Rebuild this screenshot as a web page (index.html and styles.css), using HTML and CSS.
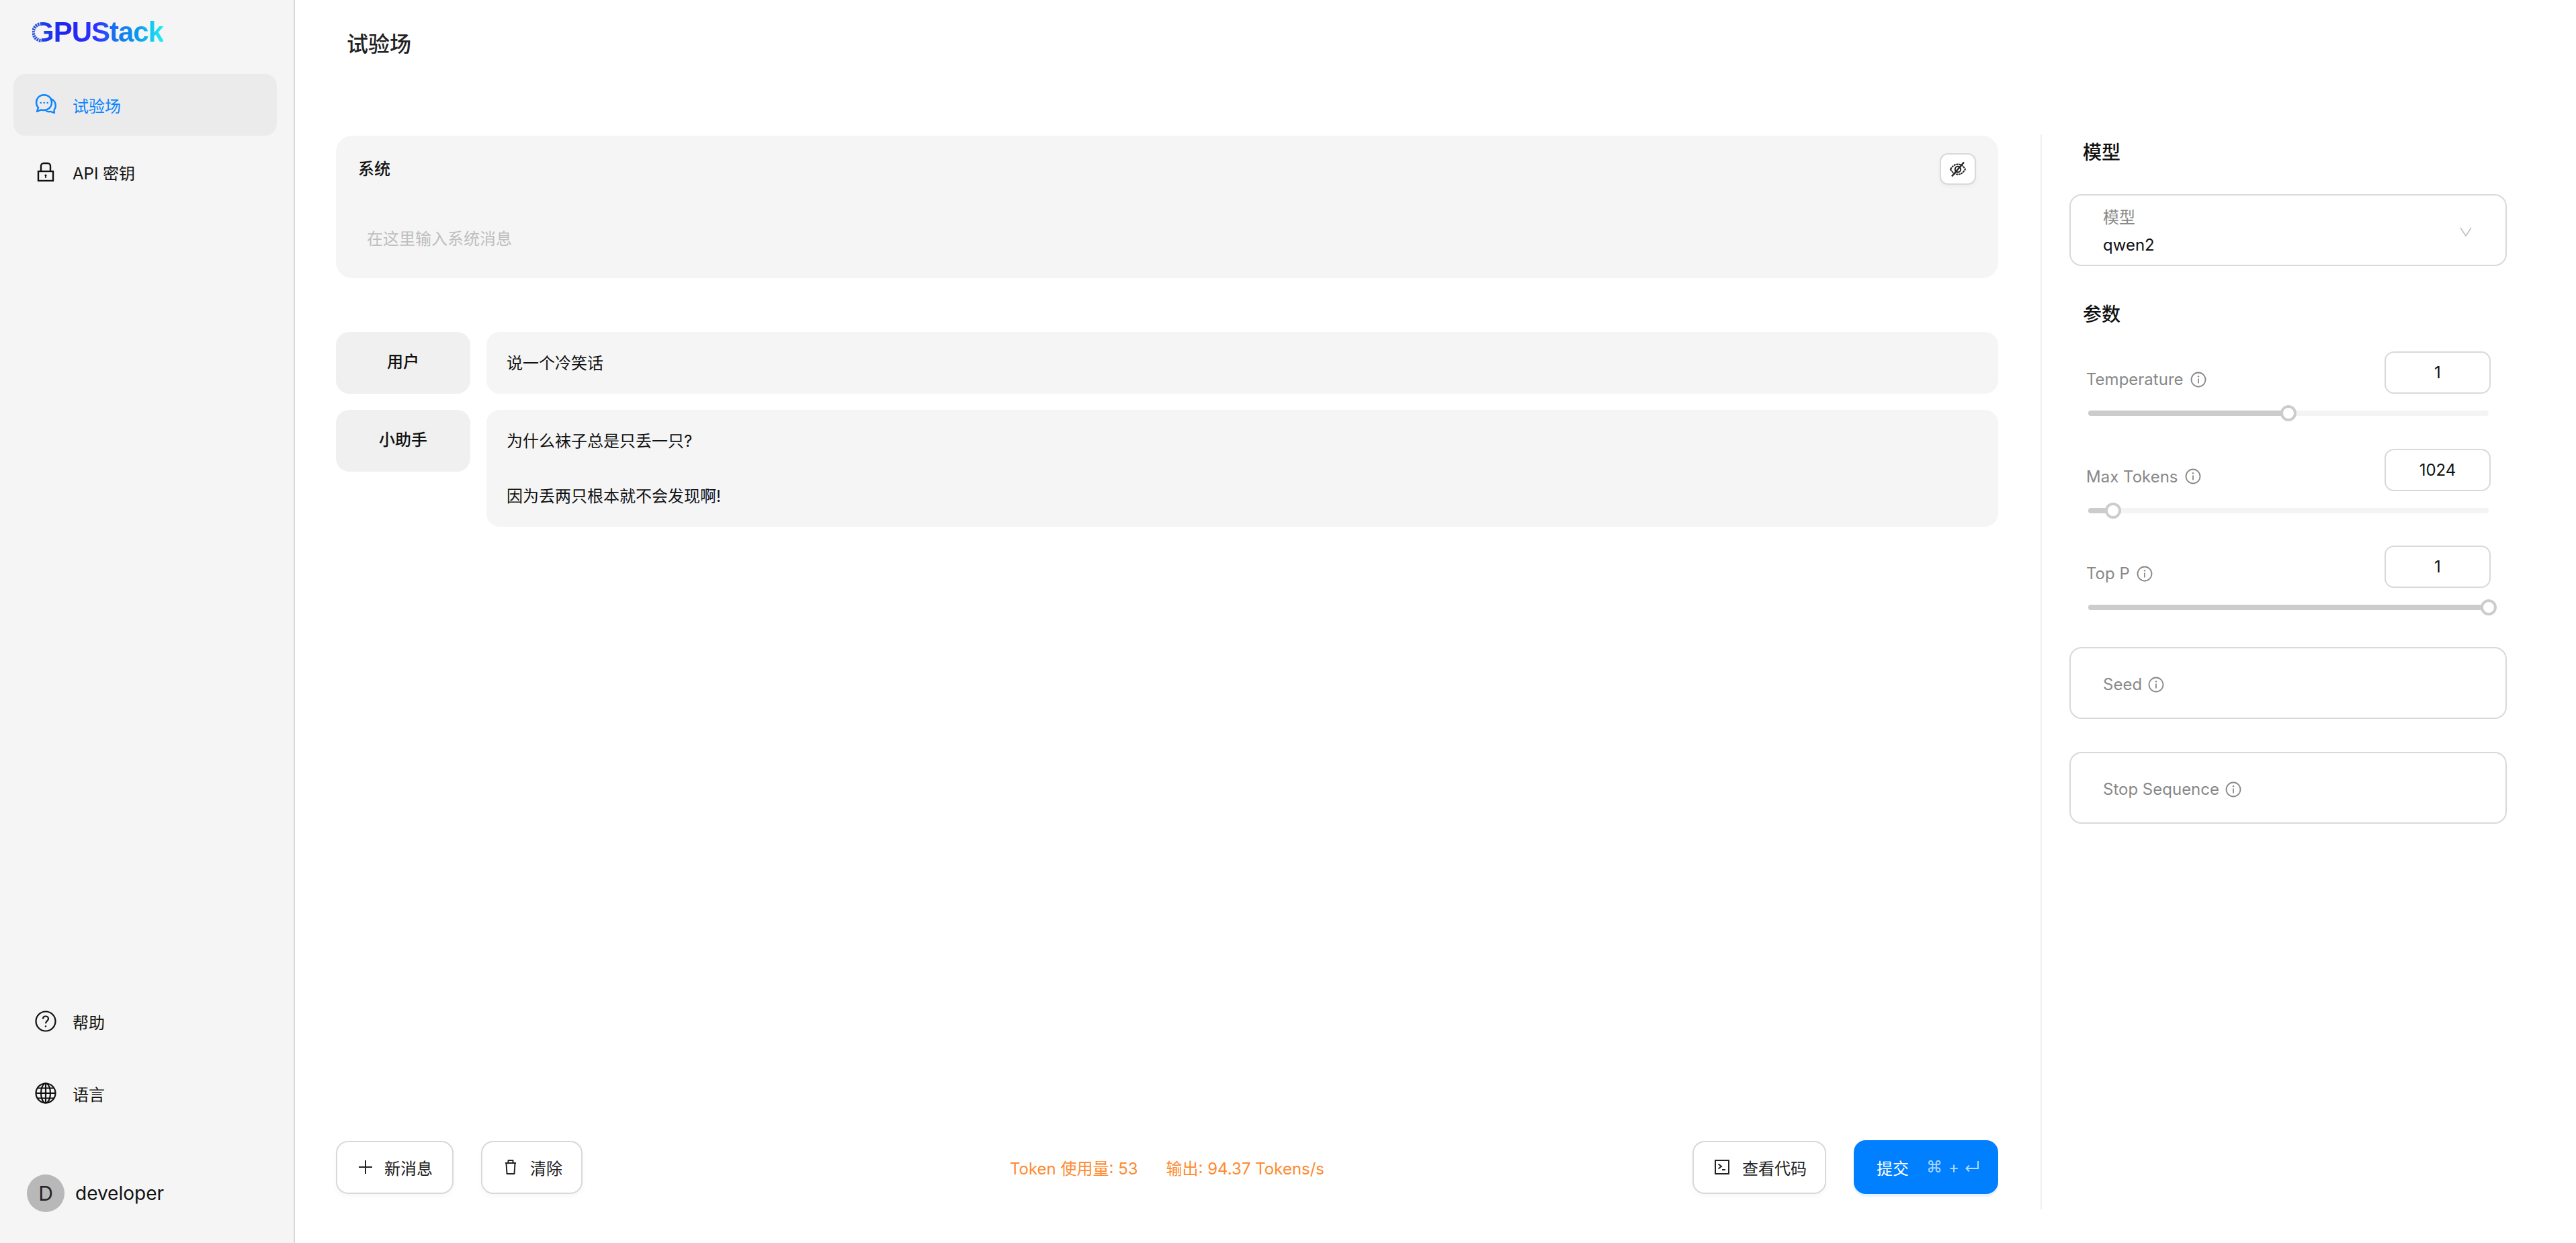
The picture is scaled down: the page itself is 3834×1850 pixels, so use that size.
FILE: index.html
```html
<!DOCTYPE html>
<html lang="zh-CN">
<head>
    <meta charset="UTF-8">
    <title>试验场 - GPUStack</title>
    <link rel="stylesheet" href="styles.css">
</head>
<body>
    <div class="app">
        <aside class="sidebar">
            <div class="logo">
                <span class="logo-text">GPUStack</span>
                <svg class="logo-ring" viewBox="0 0 20 32" width="20" height="32">
                    <rect width="14" height="32" fill="#f5f5f5"/>
                    <path d="M14 3.500A12.500 12.500 0 0 0 14 28.500" fill="none" stroke="#2f55e0" stroke-width="5" stroke-dasharray="2.500 1"/>
                </svg>
            </div>
            <nav class="nav">
                <a class="nav-item active">
                    <svg class="nav-icon" viewBox="0 0 32 32" fill="none" stroke="currentColor" stroke-width="2.400" stroke-linejoin="round">
                        <path d="M13.500 1.200C7 1.200 2 6.200 2 12.500c0 3 1.200 5.700 3 7.700L3 26l6.500-2.700c1.300.5 2.500.7 4 .7C20 24 25 19 25 12.500S20 1.200 13.500 1.200z"/>
                        <path d="M24 7c4 2 6.800 6 6.800 10.500 0 2.500-.8 4.500-2.300 6.200l.3 4.300-5.800-2.200c-2 .6-4.500.5-6.500-.5"/>
                        <circle cx="8.700" cy="13" r="1.300" fill="currentColor" stroke="none"/>
                        <circle cx="13.700" cy="13" r="1.300" fill="currentColor" stroke="none"/>
                        <circle cx="18.700" cy="13" r="1.300" fill="currentColor" stroke="none"/>
                    </svg>
                    <span>试验场</span>
                </a>
                <a class="nav-item">
                    <svg class="nav-icon" viewBox="0 0 32 32" fill="none" stroke="currentColor" stroke-width="2.400">
                        <rect x="5" y="15" width="22" height="14"/>
                        <path d="M9 15V7a4 4 0 0 1 4-4h6a4 4 0 0 1 4 4v8"/>
                        <circle cx="16" cy="21" r="1.600" fill="currentColor" stroke="none"/>
                        <path d="M16 21v4" stroke-width="1.600"/>
                    </svg>
                    <span>API 密钥</span>
                </a>
            </nav>
            <div class="sidebar-bottom">
                <a class="nav-item">
                    <svg class="nav-icon" viewBox="0 0 32 32" fill="none" stroke="currentColor" stroke-width="2.200">
                        <circle cx="16" cy="16" r="14.500"/>
                        <path d="M12 12.500c0-2.500 1.800-4 4-4s4 1.500 4 3.800c0 3.200-4 3.200-4 7"/>
                        <circle cx="16" cy="23.500" r="1.300" fill="currentColor" stroke="none"/>
                    </svg>
                    <span>帮助</span>
                </a>
                <a class="nav-item">
                    <svg class="nav-icon" viewBox="0 0 32 32" fill="none" stroke="currentColor" stroke-width="2.200">
                        <circle cx="16" cy="16" r="14.500"/>
                        <ellipse cx="16" cy="16" rx="7" ry="14.500"/>
                        <path d="M16 1.500v29M1.500 16h29M4 8.500h24M4 23.500h24"/>
                    </svg>
                    <span>语言</span>
                </a>
                <div class="user">
                    <span class="avatar">D</span>
                    <span class="user-name">developer</span>
                </div>
            </div>
        </aside>

        <main class="main">
            <h1 class="page-title">试验场</h1>
            <div class="workspace">
                <section class="chat">
                    <div class="system-card">
                        <div class="system-head">
                            <span class="system-title">系统</span>
                            <button class="eye-button">
                                <svg viewBox="0 0 28 28" width="28" height="28" fill="none" stroke="#222" stroke-width="2">
                                    <path d="M3 14c3-5 6.500-7.500 11-7.500S22 9 25 14c-3 5-6.500 7.500-11 7.500S6 19 3 14z" stroke-dasharray="3 .8"/>
                                    <circle cx="14" cy="14" r="4.200"/>
                                    <path d="M23 3.500 5 24.500" stroke-width="2.400"/>
                                </svg>
                            </button>
                        </div>
                        <div class="system-placeholder">在这里输入系统消息</div>
                    </div>
                    <div class="messages">
                        <div class="message">
                            <div class="role">用户</div>
                            <div class="bubble">说一个冷笑话</div>
                        </div>
                        <div class="message">
                            <div class="role">小助手</div>
                            <div class="bubble">为什么袜子总是只丢一只?<br><br>因为丢两只根本就不会发现啊!</div>
                        </div>
                    </div>
                    <div class="chat-footer">
                        <div class="footer-left">
                            <button class="btn btn-new">
                                <svg viewBox="0 0 20 20" width="20" height="20" fill="none" stroke="#222" stroke-width="2"><path d="M10 0v20M0 10h20"/></svg>
                                新消息
                            </button>
                            <button class="btn btn-clear">
                                <svg viewBox="0 0 20 22" width="20" height="22" fill="none" stroke="#222" stroke-width="2" stroke-linejoin="round"><path d="M2 5h16M3.500 5l1 16h11l1-16M6.500 5V1h7v4"/></svg>
                                清除
                            </button>
                        </div>
                        <div class="usage">
                            <span>Token 使用量: 53</span>
                            <span>输出: 94.37 Tokens/s</span>
                        </div>
                        <div class="footer-right">
                            <button class="btn btn-code">
                                <svg viewBox="0 0 22 22" width="22" height="22" fill="none" stroke="#222" stroke-width="2"><rect x="1" y="1" width="20" height="20"/><path d="M5.500 6.500 10 10l-4.500 3.500M11 15h5"/></svg>
                                查看代码
                            </button>
                            <button class="btn btn-submit">
                                <span>提交</span>
                                <span class="shortcut">
                                    <span class="cmd">⌘</span><span>+</span>
                                    <svg viewBox="0 0 20 18" width="20" height="18" fill="none" stroke="currentColor" stroke-width="2"><path d="M19 0v11H2M6 6.500 1.500 11 6 15.500"/></svg>
                                </span>
                            </button>
                        </div>
                    </div>
                </section>

                <section class="panel">
                    <h2 class="panel-title">模型</h2>
                    <div class="field field-select">
                        <div class="field-text">
                            <span class="field-label">模型</span>
                            <span class="field-value">qwen2</span>
                        </div>
                        <svg class="chevron" viewBox="0 0 18 14" width="18" height="14" fill="none" stroke="#bbb" stroke-width="1.500"><path d="M1 1l8 12 8-12"/></svg>
                    </div>

                    <h2 class="panel-title params-title">参数</h2>
                    <div class="param">
                        <div class="param-head">
                            <span class="param-label">Temperature <svg class="info" viewBox="0 0 24 24"><use href="#icon-info"/></svg></span>
                            <div class="param-input">1</div>
                        </div>
                        <div class="slider"><div class="slider-fill" style="width: 50%"></div><span class="slider-handle" style="left: 50%"></span></div>
                    </div>
                    <div class="param">
                        <div class="param-head">
                            <span class="param-label">Max Tokens <svg class="info" viewBox="0 0 24 24"><use href="#icon-info"/></svg></span>
                            <div class="param-input">1024</div>
                        </div>
                        <div class="slider"><div class="slider-fill" style="width: 6.2%"></div><span class="slider-handle" style="left: 6.2%"></span></div>
                    </div>
                    <div class="param">
                        <div class="param-head">
                            <span class="param-label">Top P <svg class="info" viewBox="0 0 24 24"><use href="#icon-info"/></svg></span>
                            <div class="param-input">1</div>
                        </div>
                        <div class="slider"><div class="slider-fill" style="width: 100%"></div><span class="slider-handle" style="left: 100%"></span></div>
                    </div>

                    <div class="field field-empty field-seed">
                        <span class="field-label">Seed <svg class="info" viewBox="0 0 24 24"><use href="#icon-info"/></svg></span>
                    </div>
                    <div class="field field-empty">
                        <span class="field-label">Stop Sequence <svg class="info" viewBox="0 0 24 24"><use href="#icon-info"/></svg></span>
                    </div>
                </section>
            </div>
        </main>
    </div>

    <svg class="sprite" width="0" height="0">
        <symbol id="icon-info" viewBox="0 0 24 24">
            <circle cx="12" cy="12" r="10.500" fill="none" stroke="currentColor" stroke-width="1.800"/>
            <path d="M12 10.500v7" stroke="currentColor" stroke-width="1.800" fill="none"/>
            <circle cx="12" cy="7.200" r="1.200" fill="currentColor"/>
        </symbol>
    </svg>
</body>
</html>
```

FILE: styles.css
```css
* {
    box-sizing: border-box;
}
html, body {
    margin: 0;
    height: 100%;
}
body {
    font-family: Inter, "Noto Sans CJK SC", sans-serif;
    font-size: 24px;
    color: #111;
    background-color: #fff;
    overflow: hidden;
}
button {
    font: inherit;
}
.sprite {
    position: absolute;
}
.app {
    display: flex;
    height: 100%;
}

/* sidebar */
.sidebar {
    display: flex;
    flex-direction: column;
    flex: 0 0 439px;
    background-color: #f5f5f5;
    border-right: 2px solid #d9d9d9;
    padding: 0 25px 46px 20px;
}
.logo {
    position: relative;
    height: 110px;
    padding: 24px 0 0 28px;
}
.logo-ring {
    position: absolute;
    left: 28px;
    top: 32px;
}
.logo-text {
    font-family: "Liberation Sans", sans-serif;
    font-weight: 700;
    font-size: 42px;
    letter-spacing: -1px;
    line-height: 48px;
    background: linear-gradient(90deg, #1a4fe8 0%, #2222ee 25%, #2f35ff 50%, #1a6ff0 62%, #0a98f0 80%, #1ff0f0 100%);
    -webkit-background-clip: text;
    background-clip: text;
    color: transparent;
}
.nav {
    display: flex;
    flex-direction: column;
    gap: 8px;
}
.nav-item {
    display: flex;
    align-items: center;
    gap: 24px;
    height: 92px;
    padding-left: 32px;
    border-radius: 18px;
    color: #111;
}
.nav-item.active {
    background-color: #ebebeb;
    color: #0a84ff;
}
.nav-icon {
    flex: none;
    width: 32px;
    height: 32px;
}
.sidebar-bottom {
    display: flex;
    flex-direction: column;
    gap: 15px;
    margin-top: auto;
}
.user {
    display: flex;
    align-items: center;
    gap: 16px;
    margin-top: 60px;
    padding-left: 20px;
}
.avatar {
    display: flex;
    align-items: center;
    justify-content: center;
    width: 56px;
    height: 56px;
    border-radius: 50%;
    background-color: #b8b8b8;
    font-size: 30px;
    color: #222;
}
.user-name {
    font-size: 28px;
}

/* main */
.main {
    flex: 1;
    display: flex;
    flex-direction: column;
    min-width: 0;
}
.page-title {
    height: 200px;
    margin: 0;
    padding: 44px 0 0 77px;
    font-size: 32px;
    line-height: 44px;
    font-weight: 500;
    color: #222;
}
.workspace {
    display: flex;
    height: 1600px;
    padding-left: 61px;
}

/* chat column */
.chat {
    display: flex;
    flex-direction: column;
    flex: 0 0 2474px;
    padding: 2px 0 23px;
}
.system-card {
    height: 212px;
    padding: 26px 33px 0;
    border-radius: 24px;
    background-color: #f5f5f5;
}
.system-head {
    display: flex;
    align-items: center;
    justify-content: space-between;
}
.system-title {
    font-weight: 500;
    line-height: 47px;
}
.eye-button {
    display: flex;
    align-items: center;
    justify-content: center;
    width: 54px;
    height: 47px;
    padding: 0;
    background-color: #fff;
    border: 2px solid #d9d9d9;
    border-radius: 12px;
    box-shadow: 0 3px 6px rgba(0, 0, 0, 0.04);
}
.system-placeholder {
    margin: 61px 0 0 13px;
    line-height: 40px;
    color: #bfbfbf;
}
.messages {
    display: flex;
    flex-direction: column;
    gap: 24px;
    margin-top: 80px;
}
.message {
    display: flex;
    align-items: flex-start;
    gap: 24px;
}
.role {
    flex: 0 0 200px;
    height: 92px;
    line-height: 90px;
    border-radius: 20px;
    background-color: #f0f0f0;
    text-align: center;
    font-weight: 500;
}
.bubble {
    flex: 1;
    padding: 26px 30px 25px;
    line-height: 41px;
    border-radius: 20px;
    background-color: #f5f5f5;
}
.chat-footer {
    position: relative;
    display: flex;
    align-items: center;
    justify-content: space-between;
    margin-top: auto;
}
.footer-left, .footer-right {
    display: flex;
    align-items: center;
    gap: 41px;
}
.btn {
    display: flex;
    align-items: center;
    height: 79px;
    background-color: #fff;
    border: 2px solid #d9d9d9;
    border-radius: 18px;
    box-shadow: 0 4px 8px rgba(0, 0, 0, 0.03);
    color: #222;
    white-space: nowrap;
}
.btn-new {
    width: 175px;
    gap: 18px;
    padding: 0 0 0 32px;
}
.btn-clear {
    width: 151px;
    gap: 19px;
    padding: 0 0 0 32px;
}
.btn-code {
    width: 199px;
    gap: 19px;
    padding: 0 0 0 31px;
}
.btn-submit {
    width: 215px;
    height: 80px;
    gap: 26px;
    padding: 0 0 0 34px;
    background-color: #007fff;
    border: none;
    color: #fff;
    box-shadow: 0 4px 0 #e6f4ff;
}
.shortcut {
    display: flex;
    align-items: center;
    gap: 9px;
    color: rgba(255, 255, 255, 0.7);
}
.cmd {
    font-family: "DejaVu Sans", sans-serif;
}
.usage {
    position: absolute;
    left: 0;
    right: 0;
    display: flex;
    justify-content: center;
    gap: 42px;
    color: #ff8a2f;
    pointer-events: none;
}

/* right panel */
.panel {
    flex: 1;
    margin-left: 63px;
    padding: 2px 0 0 41px;
    border-left: 2px solid #f0f0f0;
}
.panel-title {
    margin: 0;
    padding-left: 20px;
    font-size: 28px;
    line-height: 50px;
    font-weight: 500;
}
.field {
    width: 651px;
    border: 2px solid #d9d9d9;
    border-radius: 18px;
    padding-left: 48px;
}
.field-select {
    display: flex;
    align-items: center;
    justify-content: space-between;
    height: 107px;
    margin-top: 37px;
    padding: 4px 50px 0 48px;
}
.field-text {
    display: flex;
    flex-direction: column;
    gap: 7px;
}
.field-label {
    display: flex;
    align-items: center;
    gap: 9px;
    line-height: 34px;
    color: #888;
}
.field-value {
    line-height: 34px;
}
.params-title {
    margin-top: 47px;
}
.param {
    width: 651px;
    height: 144.5px;
    padding: 0 24px 0 25px;
}
.params-title + .param {
    margin-top: 30px;
}
.param-head {
    display: flex;
    align-items: center;
    justify-content: space-between;
}
.param-label {
    display: flex;
    align-items: center;
    gap: 10px;
    margin-top: 20px;
    color: #888;
}
.param-input {
    width: 158px;
    height: 63px;
    line-height: 59px;
    border: 2px solid #d9d9d9;
    border-radius: 14px;
    text-align: center;
    color: #111;
}
.slider {
    position: relative;
    height: 8px;
    margin: 25px 3px 0;
    border-radius: 4px;
    background-color: #f4f4f4;
}
.slider-fill {
    height: 100%;
    border-radius: 4px;
    background-color: #ccc;
}
.slider-handle {
    position: absolute;
    top: -8px;
    width: 24px;
    height: 24px;
    margin-left: -12px;
    border: 4px solid #ccc;
    border-radius: 50%;
    background-color: #fff;
}
.info {
    width: 24px;
    height: 24px;
    color: #888;
}
.field-empty {
    display: flex;
    align-items: center;
    height: 107px;
    padding-top: 5px;
}
.field-seed {
    margin-top: 6px;
    margin-bottom: 49px;
}
```
